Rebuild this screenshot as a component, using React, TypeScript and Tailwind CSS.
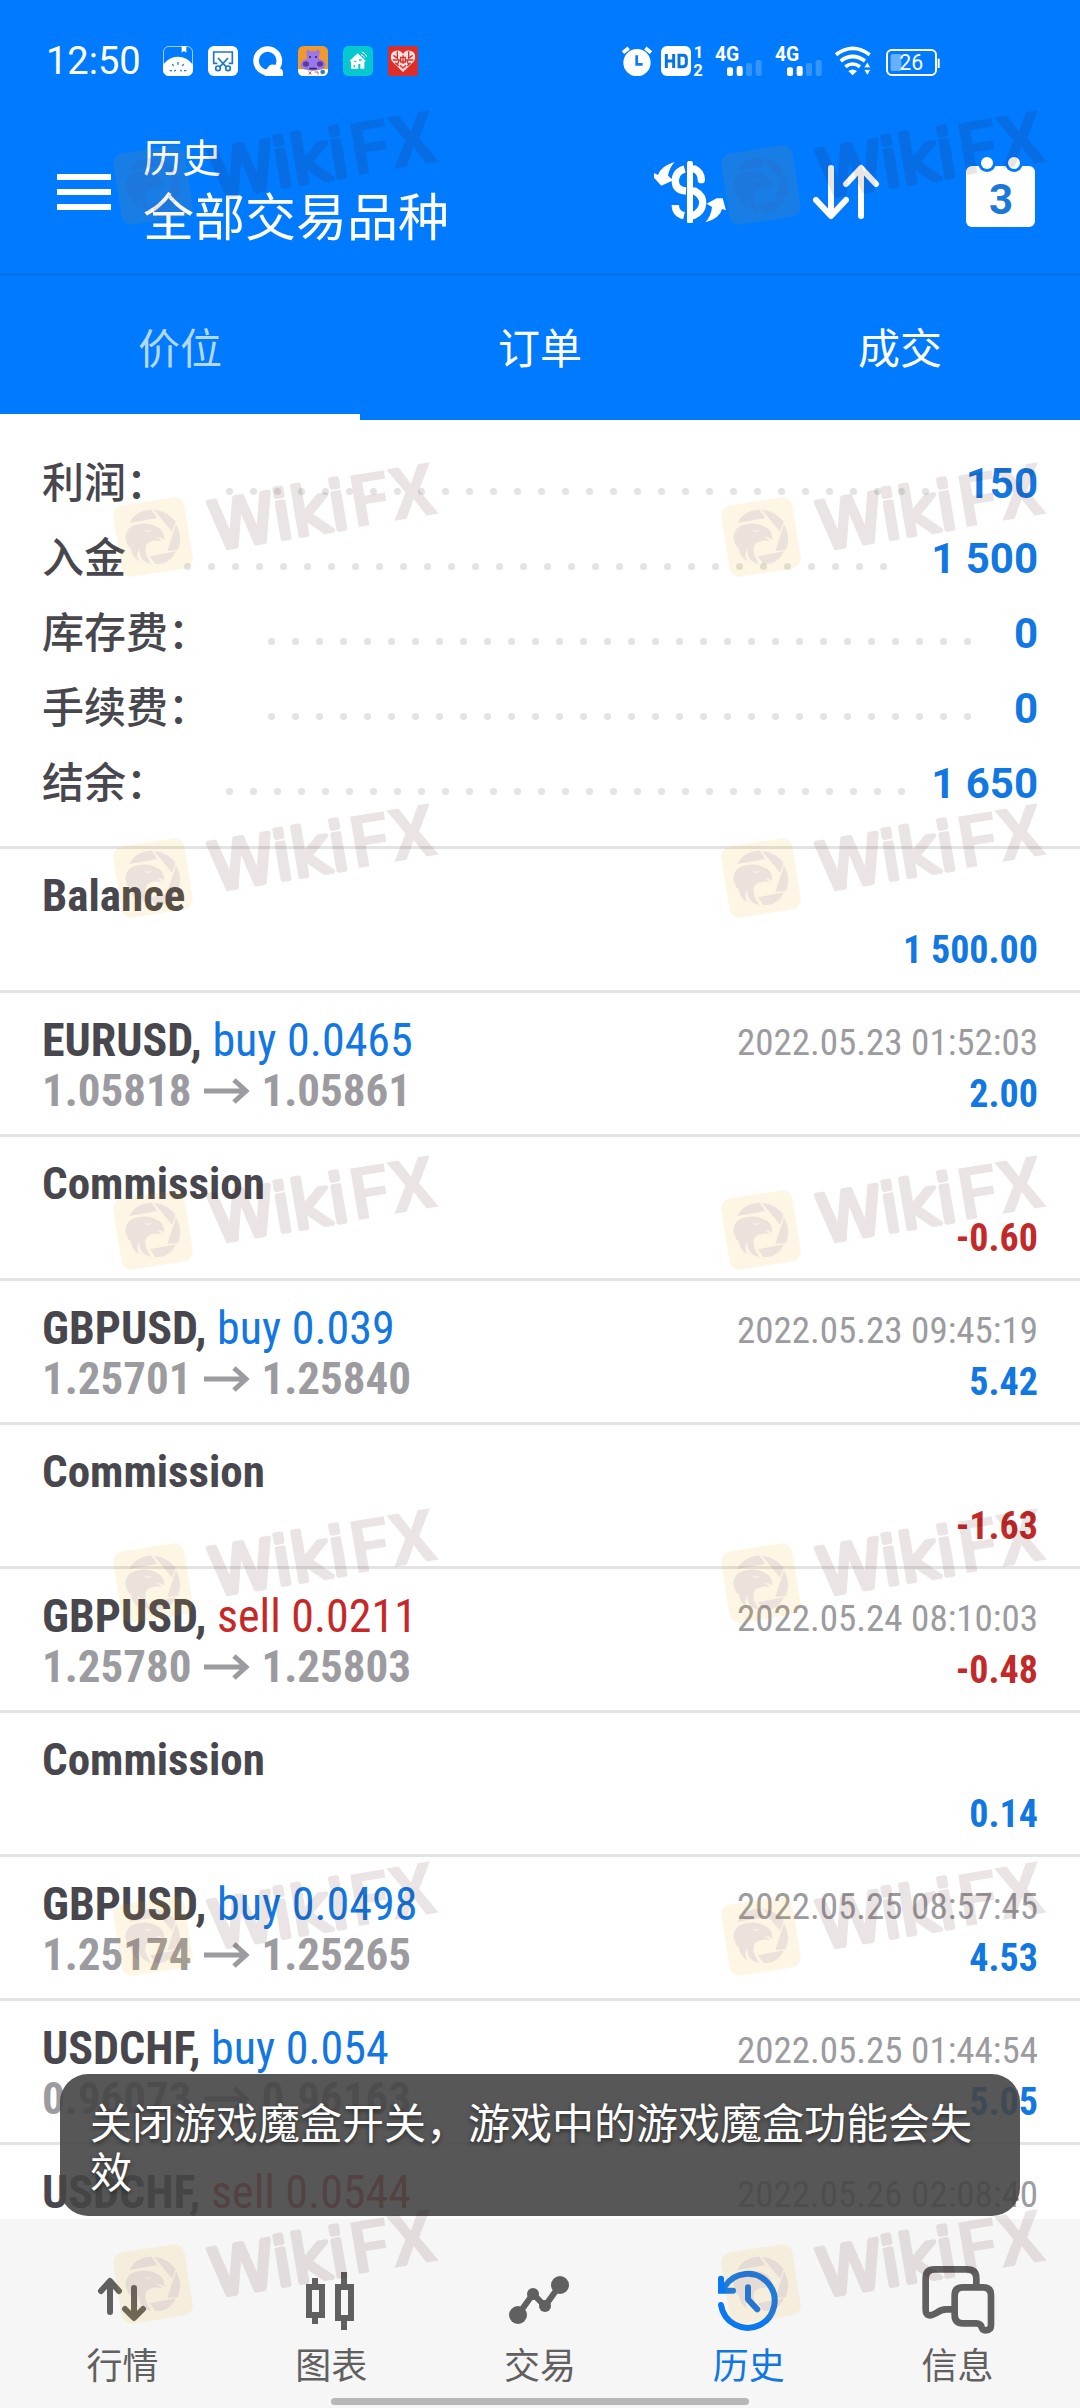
import type { ReactNode } from "react";

const summary = [
  { label: "利润：", value: "150" },
  { label: "入金", value: "1 500" },
  { label: "库存费：", value: "0" },
  { label: "手续费：", value: "0" },
  { label: "结余：", value: "1 650" },
];

type Entry = {
  title: string;
  side?: "buy" | "sell";
  volume?: string;
  open?: string;
  close?: string;
  time?: string;
  amount: string;
};

const entries: Entry[] = [
  { title: "Balance", amount: "1 500.00" },
  { title: "EURUSD", side: "buy", volume: "0.0465", open: "1.05818", close: "1.05861", time: "2022.05.23 01:52:03", amount: "2.00" },
  { title: "Commission", amount: "-0.60" },
  { title: "GBPUSD", side: "buy", volume: "0.039", open: "1.25701", close: "1.25840", time: "2022.05.23 09:45:19", amount: "5.42" },
  { title: "Commission", amount: "-1.63" },
  { title: "GBPUSD", side: "sell", volume: "0.0211", open: "1.25780", close: "1.25803", time: "2022.05.24 08:10:03", amount: "-0.48" },
  { title: "Commission", amount: "0.14" },
  { title: "GBPUSD", side: "buy", volume: "0.0498", open: "1.25174", close: "1.25265", time: "2022.05.25 08:57:45", amount: "4.53" },
  { title: "USDCHF", side: "buy", volume: "0.054", open: "0.96073", close: "0.96163", time: "2022.05.25 01:44:54", amount: "5.05" },
  { title: "USDCHF", side: "sell", volume: "0.0544", time: "2022.05.26 02:08:40", amount: "" },
];

function AppBadges() {
  return (
    <div className="ml-[22px] flex gap-[15px]" aria-hidden="true">
      <svg className="size-[30px]" viewBox="0 0 90 90">
        <rect x="1.5" y="1.5" width="87" height="87" rx="16" fill="none" stroke="#9fd0ff" strokeWidth="3" />
        <path d="M56 0h14v20l-7-5-7 5z" fill="#fff" />
        <path d="M0 56Q18 32 45 32T90 56V72Q88 90 70 90H20Q2 90 0 72Z" fill="#fff" />
        <path d="M45 48v8M28 54l4 6M62 54l-4 6M20 74h7M63 74h7M34 76l4-4M56 76l-4-4" stroke="#1a78d6" strokeWidth="4" />
      </svg>
      <svg className="size-[30px]" viewBox="0 0 90 90">
        <rect width="90" height="90" rx="18" fill="#fff" />
        <path d="M28 52H17V18H73V52H62M30 36L56 64M60 36L34 64" fill="none" stroke="#1a78c8" strokeWidth="5" />
        <circle cx="30" cy="67" r="7" fill="none" stroke="#1a78c8" strokeWidth="5" />
        <circle cx="60" cy="67" r="7" fill="none" stroke="#1a78c8" strokeWidth="5" />
      </svg>
      <svg className="size-[30px]" viewBox="0 0 90 90">
        <circle cx="44" cy="44" r="35" fill="none" stroke="#fff" strokeWidth="17" />
        <path d="M36 90Q26 76 42 68Q50 52 64 56Q76 58 76 66Q90 68 90 80V90Z" fill="#fff" />
      </svg>
      <svg className="size-[30px]" viewBox="0 0 90 90">
        <rect width="90" height="90" rx="16" fill="#f09a2c" />
        <path d="M0 70H90V76Q88 90 74 90H16Q2 90 0 76Z" fill="#fff" />
        <path d="M24 16l8-6 5 6h16l5-6 8 6-4 22Q82 42 82 58Q78 74 45 74T8 58Q8 42 28 38Z" fill="#9a78e8" />
        <ellipse cx="24" cy="54" rx="9" ry="8" fill="#5b3aa0" />
        <ellipse cx="66" cy="54" rx="9" ry="8" fill="#5b3aa0" />
        <path d="M36 30v6M54 30v6M34 68h22" stroke="#3c2470" strokeWidth="5" />
        <path d="M32 76l8 10M40 76l-8 10M50 78h10v8" stroke="#e0604a" strokeWidth="3" fill="none" />
        <circle cx="74" cy="78" r="7" fill="#2a7fc0" />
      </svg>
      <svg className="size-[30px]" viewBox="0 0 90 90">
        <rect width="90" height="90" rx="16" fill="#06c8cf" />
        <path d="M20 44L44 22L68 44L64 48V68H52V54H46V68H24V48Z" fill="#fff" />
        <path d="M34 46h6M48 42h8M34 56v8" stroke="#06c8cf" strokeWidth="4" />
        <path d="M54 26q8 2 10 9M56 18q12 3 15 14" stroke="#fff" strokeWidth="3" fill="none" />
      </svg>
      <svg className="size-[30px]" viewBox="0 0 90 90">
        <rect width="90" height="90" rx="6" fill="#dc2f2c" />
        <path d="M45 78L12 46Q2 26 18 16Q36 8 45 24Q54 8 72 16Q88 26 78 46Z" fill="#fbe4e2" />
        <path d="M16 28l14 10M28 16v22M14 42h20l-6 14M74 28L60 38M62 16v22M76 42H56l6 14M36 58l9 8 9-8M38 34h14v14H38zM45 28v26M22 50l10 10M68 50L58 60" stroke="#dc2f2c" strokeWidth="4" fill="none" />
      </svg>
    </div>
  );
}

function SignalIcon() {
  return (
    <svg className="h-[30px] w-[47px] overflow-visible" viewBox="0 0 141 90" aria-hidden="true">
      <text x="0" y="44" fontSize="58" fontWeight="700" fill="#fff">4G</text>
      <rect x="36" y="64" width="18" height="26" rx="6" fill="#fff" />
      <rect x="65" y="60" width="18" height="30" rx="6" fill="#fff" />
      <rect x="93" y="51" width="18" height="39" rx="6" fill="#3395ff" />
      <rect x="122" y="42" width="18" height="48" rx="6" fill="#3395ff" />
    </svg>
  );
}

function StatusBar() {
  return (
    <div className="flex h-[122px] items-center pl-[46px] pr-[140px] text-white">
      <span className="text-[38px] leading-[48px]">12:50</span>
      <AppBadges />
      <div className="ml-auto flex items-center">
        <svg className="h-[30px] w-[30px]" viewBox="0 0 90 90" aria-hidden="true">
          <circle cx="45" cy="50" r="41" fill="#fff" />
          <path d="M3 20L20 6M70 6L87 20" stroke="#fff" strokeWidth="11" />
          <path d="M44 28V55H62" stroke="#0a7bfb" strokeWidth="8" fill="none" />
        </svg>
        <svg className="ml-[9px] h-[30px] w-[42px] overflow-visible" viewBox="0 0 126 90" aria-hidden="true">
          <rect width="90" height="90" rx="18" fill="#fff" />
          <path d="M16 24V66M38 24V66M16 45H38M54 28H66Q76 28 76 38V52Q76 62 66 62H54Z" stroke="#0a72e8" strokeWidth="9" fill="none" />
          <text x="98" y="37" fontSize="50" fontWeight="700" fill="#fff">1</text>
          <text x="97" y="89" fontSize="50" fontWeight="700" fill="#fff">2</text>
        </svg>
        <div className="ml-[12px] flex gap-[13px]">
          <SignalIcon />
          <SignalIcon />
        </div>
        <svg className="ml-[13px] h-[30px] w-[37px]" viewBox="0 0 111 90" aria-hidden="true">
          <path d="M3 26Q53 -12 104 26" stroke="#fff" strokeWidth="11" fill="none" />
          <path d="M17 45Q53 18 90 45" stroke="#fff" strokeWidth="11" fill="none" />
          <path d="M31 62Q53 46 75 62" stroke="#fff" strokeWidth="11" fill="none" />
          <path d="M40 75Q53 66 66 75L53 88Z" fill="#fff" />
          <path d="M97 48L107 65H87Z M97 88L107 71H87Z" fill="#fff" stroke="#0a7bfb" strokeWidth="2" />
        </svg>
        <svg className="ml-[14px] h-[30px] w-[54px] overflow-visible" viewBox="0 0 162 90" aria-hidden="true">
          <rect x="3" y="12" width="147" height="75" rx="14" fill="none" stroke="#fff" strokeWidth="6" />
          <path d="M158 38V66" stroke="#fff" strokeWidth="6" />
          <rect x="14" y="24" width="32" height="51" rx="5" fill="#66b0ff" />
          <text x="40" y="73" fontSize="64" fill="#fff">26</text>
        </svg>
      </div>
    </div>
  );
}

function Toolbar() {
  return (
    <div className="flex h-[151px] items-center pl-[57px] pr-[45px] pb-[11px] text-white">
      <button type="button" aria-label="菜单" className="flex w-[54px] flex-col gap-[9px]">
        <span className="h-[6px] bg-white" />
        <span className="h-[6px] bg-white" />
        <span className="h-[6px] bg-white" />
      </button>
      <div className="ml-[32px]">
        <p className="text-[39px] leading-[54px]">历史</p>
        <h1 className="text-[51px] leading-[66px]">全部交易品种</h1>
      </div>
      <div className="ml-auto flex items-center">
        <button type="button" aria-label="货币">
          <svg className="h-[62px] w-[72px]" viewBox="0 0 216 186" fill="none" stroke="#fff">
            <path d="M108 8V180" strokeWidth="18" strokeLinecap="round" />
            <path d="M92 24Q64 32 64 60T96 90M64 132Q64 158 90 164" strokeWidth="22" stroke="#fff" />
            <path d="M122 24Q142 34 142 56M122 90Q148 104 146 128T118 164" strokeWidth="22" strokeLinecap="round" />
            <path d="M62 3Q22 14 12 42L0 36V50L22 74L58 58L42 44Q46 20 62 3Z" fill="#fff" stroke="none" />
            <path d="M154 184Q198 172 204 144L216 148L206 112L188 112L158 128L174 138Q172 164 154 184Z" fill="#fff" stroke="none" />
          </svg>
        </button>
        <button type="button" aria-label="排序" className="ml-[86px]">
          <svg className="h-[58px] w-[68px]" viewBox="0 0 68 58" fill="none" stroke="#fff" strokeWidth="6" strokeLinecap="round" strokeLinejoin="round">
            <path d="M19 5V51M4 37L19 53L34 37M49 53V7M34 21L49 5L64 21" />
          </svg>
        </button>
        <button type="button" aria-label="选择日期" className="ml-[86px]">
          <svg className="h-[70px] w-[69px]" viewBox="0 0 69 70">
            <rect x="0" y="9" width="69" height="61" rx="6" fill="#fff" />
            <circle cx="21" cy="6" r="9" fill="#007aff" />
            <circle cx="48" cy="6" r="9" fill="#007aff" />
            <circle cx="21" cy="6" r="6" fill="#fff" />
            <circle cx="48" cy="6" r="6" fill="#fff" />
            <text x="35" y="57" fontSize="42" fontWeight="700" textAnchor="middle" fill="#1a78d8">3</text>
          </svg>
        </button>
      </div>
    </div>
  );
}

function Tabs() {
  return (
    <div role="tablist" className="grid grid-cols-3 border-t-[3px] border-[#0073ea] text-[42px] leading-[52px] text-white">
      <button type="button" role="tab" aria-selected="true" className="border-b-[6px] border-white pt-[48px] pb-[38px] text-[#b3d7ff]">价位</button>
      <button type="button" role="tab" aria-selected="false" className="pt-[48px] pb-[44px]">订单</button>
      <button type="button" role="tab" aria-selected="false" className="pt-[48px] pb-[44px]">成交</button>
    </div>
  );
}

function DotLeader() {
  return (
    <span className="ml-[49px] mr-[16px] mt-[16px] flex h-[7px] flex-1 flex-wrap overflow-hidden" aria-hidden="true">
      {Array.from({ length: 36 }, (_, i) => (
        <span key={i} className="flex h-[7px] w-[24px] justify-center">
          <span className="size-[7px] rounded-full bg-[#e3e3e3]" />
        </span>
      ))}
    </span>
  );
}

function Summary() {
  return (
    <dl className="px-[42px] pt-[26px] pb-[25px]">
      {summary.map((s) => (
        <div key={s.label} className="flex h-[75px] items-center text-[42px] leading-[52px]">
          <dt className="font-medium text-[#48474d]">{s.label}</dt>
          <DotLeader />
          <dd className="font-bold text-[#1177e2]">{s.value}</dd>
        </div>
      ))}
    </dl>
  );
}

function Arrow() {
  return (
    <svg className="mx-[12px] h-[26px] w-[46px]" viewBox="0 0 46 26" fill="none" stroke="#9c9ba0" strokeWidth="5" aria-label="至">
      <path d="M0 13H42M30 2L42 13L30 24" />
    </svg>
  );
}

function EntryRow({ e }: { e: Entry }) {
  const sideColor = e.side === "sell" ? "text-[#c62828]" : "text-[#1177e2]";
  const amountColor = e.amount.startsWith("-") ? "text-[#c22a2a]" : "text-[#1177e2]";
  return (
    <li className="flex justify-between border-t-[3px] border-[#e3e3e3] px-[42px] pt-[22px] pb-[14px] font-['Roboto_Condensed',Roboto,sans-serif]">
      <div>
        <p className={e.side ? "text-[46px] leading-[50px]" : "text-[45px] leading-[50px]"}>
          <span className="font-bold text-[#48474d]">{e.side ? e.title + "," : e.title}</span>
          {e.side && <span className={sideColor}> {e.side} {e.volume}</span>}
        </p>
        {e.open && (
          <p className="flex items-center text-[45px] font-bold leading-[51px] text-[#9c9ba0]">
            {e.open}
            <Arrow />
            {e.close}
          </p>
        )}
      </div>
      <div className="text-right">
        <p className="h-[54px] text-[37px] leading-[56px] text-[#9c9ba0]">{e.time}</p>
        <p className={"h-[51px] text-[38px] font-bold leading-[51px] " + amountColor}>{e.amount}</p>
      </div>
    </li>
  );
}

function NavItem({ label, active, children }: { label: string; active?: boolean; children: ReactNode }) {
  return (
    <a
      href="#"
      aria-current={active ? "page" : undefined}
      className={"flex flex-col items-center gap-[13px] text-[36px] leading-[44px] " + (active ? "text-[#1177e2]" : "text-[#606060]")}
    >
      {children}
      <span>{label}</span>
    </a>
  );
}

function BottomNav() {
  return (
    <nav className="bg-[#f6f6f6] px-[18px] pt-[41px] pb-[3px]">
      <div className="grid grid-cols-5">
        <NavItem label="行情">
          <svg className="size-[72px]" viewBox="86 2260 72 72" fill="none" stroke="currentColor" strokeWidth="6" strokeLinecap="round" strokeLinejoin="round">
            <path d="M110 2282V2312M101 2291L110 2281L119 2291M134 2288V2317M125 2309L134 2318L143 2309" />
          </svg>
        </NavItem>
        <NavItem label="图表">
          <svg className="size-[72px]" viewBox="296 2260 72 72" fill="none" stroke="currentColor" strokeWidth="6">
            <path d="M310 2287H323V2315H310ZM316 2278V2287M316 2315V2324M339 2287H352V2318H339ZM345 2272V2287M345 2318V2330" />
          </svg>
        </NavItem>
        <NavItem label="交易">
          <svg className="size-[72px]" viewBox="15 30 216 216" fill="currentColor">
            <path d="M57 195L102 132L138 168L183 105" fill="none" stroke="currentColor" strokeWidth="18" />
            <circle cx="57" cy="195" r="27" />
            <circle cx="102" cy="132" r="18" />
            <circle cx="138" cy="168" r="18" />
            <circle cx="183" cy="105" r="27" />
          </svg>
        </NavItem>
        <NavItem label="历史" active>
          <svg className="size-[72px]" viewBox="642 30 216 216" fill="none" stroke="#0a78f0" strokeWidth="18" strokeLinecap="round">
            <path d="M666 165A81 81 0 1 0 677 110" />
            <path d="M666 86V122H702" strokeLinejoin="miter" />
            <path d="M747 112V148L775 178" strokeLinejoin="round" />
          </svg>
        </NavItem>
        <NavItem label="信息">
          <svg className="size-[72px] overflow-visible" viewBox="1265 30 216 216" fill="none" stroke="currentColor" strokeWidth="20" strokeLinejoin="round">
            <path d="M1360 178H1338Q1322 178 1310 188Q1276 208 1276 178V85Q1276 58 1303 58H1400Q1428 58 1428 85V108" />
            <path d="M1388 112H1448Q1472 112 1472 136V226Q1472 241 1456 241Q1446 241 1444 232Q1441 220 1428 220H1388Q1363 220 1363 195V136Q1363 112 1388 112Z" />
          </svg>
        </NavItem>
      </div>
      <div className="mx-auto mt-[9px] h-[7px] w-2/5 rounded-full bg-[#b8b8b8]" />
    </nav>
  );
}

const markRows = [185, 537, 878, 1230, 1583, 1936, 2284];
const markColumns = [153, 761];

function Watermark({ x, y }: { x: number; y: number }) {
  return (
    <g transform={`translate(${x} ${y})`}>
      <g transform="rotate(-9)" opacity="0.1">
        <rect x="-36" y="-36" width="72" height="72" rx="10" fill="#eba500" />
      </g>
      <g transform="scale(0.3333) translate(-181 -178)" fill="#5a3c96" opacity="0.1">
        <path d="M110 136Q128 98 177 96L194 121Z" />
        <path d="M184 96Q226 102 249 132L238 162Z" />
        <path d="M250 140Q272 180 255 217L224 220Z" />
        <path d="M172 236L250 221Q230 262 188 259Z" />
        <path
          fillRule="evenodd"
          d="M98 180Q100 150 126 142Q160 132 186 144Q216 154 215 186Q206 177 190 178Q204 184 208 190Q180 186 166 196Q146 216 176 259Q138 250 140 214Q128 232 140 250Q118 240 114 210Q106 212 98 180ZM154 156Q166 168 178 158Q166 160 154 156Z"
        />
      </g>
      <g transform="rotate(-9.5)" opacity="0.1" fill="#3c0000" stroke="#3c0000" strokeLinejoin="round">
        <text x="58" y="23" fontSize="66" strokeWidth="5" className="font-['DejaVu_Sans',sans-serif]">Wiki</text>
        <text x="200" y="24" fontSize="73" fontWeight="700" strokeWidth="0">FX</text>
      </g>
    </g>
  );
}

function WatermarkLayer() {
  return (
    <svg className="pointer-events-none absolute inset-0 h-full w-full" aria-hidden="true">
      {markRows.map((y) => markColumns.map((x) => <Watermark key={`${x}-${y}`} x={x} y={y} />))}
    </svg>
  );
}

export default function App() {
  return (
    <div className="relative flex h-screen flex-col overflow-hidden bg-white font-[Roboto,'Noto_Sans_CJK_SC',sans-serif]">
      <header className="shrink-0 bg-[#007aff]">
        <StatusBar />
        <Toolbar />
        <Tabs />
      </header>
      <main className="relative flex min-h-0 flex-1 flex-col">
        <div className="min-h-0 flex-1 overflow-hidden">
          <Summary />
          <ul>
            {entries.map((e, i) => (
              <EntryRow key={i} e={e} />
            ))}
          </ul>
        </div>
        <div role="status" className="absolute inset-x-[60px] bottom-[3px] rounded-[28px] bg-[#454545]/90 px-[30px] pt-[26px] pb-[18px] text-[42px] leading-[49px] text-white [text-shadow:0_2px_4px_rgba(0,0,0,0.5)]">
          关闭游戏魔盒开关，游戏中的游戏魔盒功能会失效
        </div>
      </main>
      <BottomNav />
      <WatermarkLayer />
    </div>
  );
}
